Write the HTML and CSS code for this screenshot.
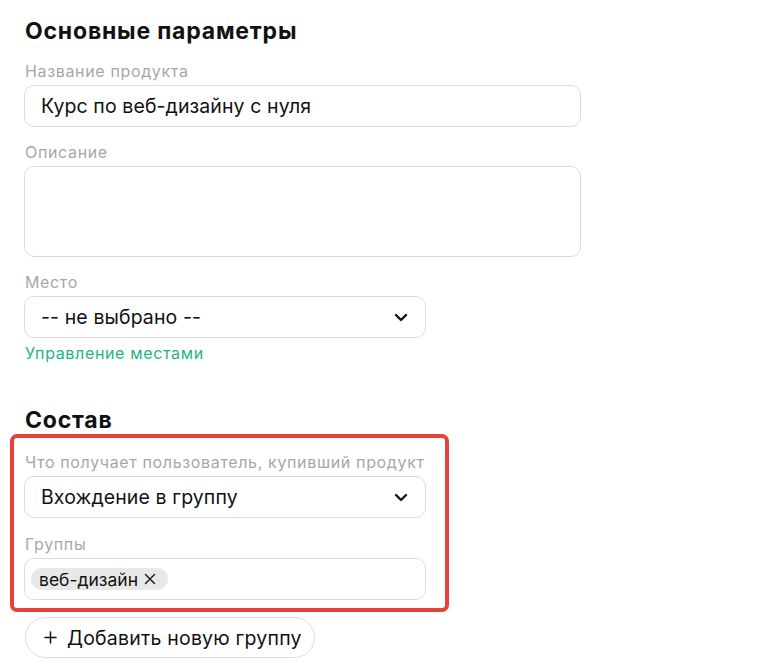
FILE: index.html
```html
<!DOCTYPE html>
<html lang="ru">
<head>
    <meta charset="UTF-8">
    <meta name="viewport" content="width=device-width, initial-scale=1.0">
    <title>Продукт</title>
    <link rel="stylesheet" href="styles.css">
</head>
<body>
    <div class="page">
        <h2 class="section-title">Основные параметры</h2>

        <div class="field">
            <label for="name">Название продукта</label>
            <input id="name" class="control wide" type="text" value="Курс по веб-дизайну с нуля">
        </div>

        <div class="field">
            <label for="description">Описание</label>
            <textarea id="description" class="control wide textarea"></textarea>
        </div>

        <div class="field">
            <label for="place">Место</label>
            <div class="select control">
                <span>-- не выбрано --</span>
                <svg class="chevron" viewBox="0 0 14 9" width="14" height="9">
                    <path d="M2 2l5 5 5-5" fill="none" stroke="#111" stroke-width="2.4" stroke-linecap="round" stroke-linejoin="round"/>
                </svg>
            </div>
            <a href="#" class="link">Управление местами</a>
        </div>

        <h2 class="section-title second">Состав</h2>

        <div class="highlight">
            <div class="field">
                <label>Что получает пользователь, купивший продукт</label>
                <div class="select control">
                    <span>Вхождение в группу</span>
                    <svg class="chevron" viewBox="0 0 14 9" width="14" height="9">
                        <path d="M2 2l5 5 5-5" fill="none" stroke="#111" stroke-width="2.4" stroke-linecap="round" stroke-linejoin="round"/>
                    </svg>
                </div>
            </div>

            <div class="field last">
                <label>Группы</label>
                <div class="tags control">
                    <span class="tag">веб-дизайн
                        <svg viewBox="0 0 12 12" width="12" height="12">
                            <path d="M1.5 1.5l9 9M10.5 1.5l-9 9" stroke="#222" stroke-width="1.5" stroke-linecap="round"/>
                        </svg>
                    </span>
                </div>
            </div>
        </div>

        <button class="add-group" type="button">
            <svg viewBox="0 0 14 14" width="13" height="13">
                <path d="M7 1v12M1 7h12" stroke="#111" stroke-width="1.6" stroke-linecap="round"/>
            </svg>
            Добавить новую группу
        </button>
    </div>
</body>
</html>
```

FILE: styles.css
```css
body {
    margin: 0;
    font-family: 'Inter', 'Noto Sans', sans-serif;
    color: #111;
    background: #fff;
}

.page {
    padding: 17px 0 0 24px;
}

.section-title {
    font-size: 23px;
    font-weight: 700;
    line-height: 28px;
    margin: 0 0 14px 1px;
    letter-spacing: 0.8px;
}

.section-title.second {
    margin-top: 41px;
    margin-bottom: 0;
}

.field {
    margin-bottom: 13px;
}

.field.last {
    margin-bottom: 0;
}

.field label {
    display: block;
    font-size: 16px;
    line-height: 24px;
    letter-spacing: 0.65px;
    color: #a7a7a7;
    margin: 0 0 2px 1px;
}

.control {
    box-sizing: border-box;
    height: 42px;
    width: 402px;
    border: 1px solid #dcdcdc;
    border-radius: 10px;
    background: #fff;
    font-family: inherit;
    font-size: 19.5px;
    letter-spacing: 0.1px;
    color: #111;
}

.control.wide {
    width: 557px;
    padding: 0 16px;
}

.textarea {
    display: block;
    height: 91px;
    resize: none;
    outline: none;
}

.select {
    display: flex;
    align-items: center;
    justify-content: space-between;
    padding: 0 17px 0 16px;
}

.link {
    display: block;
    margin: 3px 0 0 1px;
    line-height: 24px;
    font-size: 16px;
    letter-spacing: 0.65px;
    color: #1bb583;
    text-decoration: none;
}

/* annotated group: thick red frame around the composition fields */
.highlight {
    margin-left: -14px;
    width: 405px;
    padding: 12px 16px 8px 10px;
    border: 4px solid #e4433a;
    border-radius: 7px;
}

.highlight .field {
    margin-bottom: 14px;
}

.highlight .field.last {
    margin-bottom: 0;
}

.tags {
    display: flex;
    align-items: center;
    padding: 0 6px;
}

.tag {
    display: inline-flex;
    align-items: center;
    gap: 6px;
    height: 22px;
    padding: 0 12px 0 8px;
    border-radius: 11px;
    background: #e8e8e8;
    font-size: 17.5px;
    letter-spacing: 0;
}

.add-group {
    display: flex;
    align-items: center;
    gap: 10px;
    margin: 5px 0 0 1px;
    height: 41px;
    padding: 0 12px 0 18px;
    border: 1px solid #dcdcdc;
    border-radius: 21px;
    background: #fff;
    font-family: inherit;
    font-size: 19.5px;
    letter-spacing: 0.2px;
    color: #111;
}
```
